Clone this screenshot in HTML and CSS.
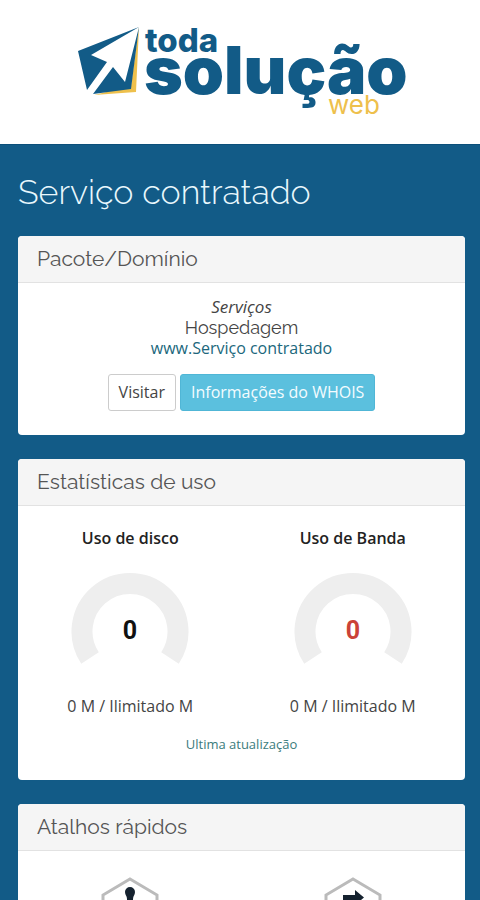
FILE: index.html
```html
<!DOCTYPE html>
<html lang="pt-BR">
<head>
<meta charset="utf-8">
<meta name="viewport" content="width=device-width, initial-scale=1">
<title>Serviço contratado</title>
<link rel="stylesheet" href="styles.css">
</head>
<body>
<header class="site-header">
  <svg class="logo" viewBox="0 0 340 100" role="img" aria-label="toda solução web">
    <path class="logo-gold" d="M69 7 66 72 24 75 61 66z"/>
    <path class="logo-blue" d="M8 31 69 7 21 35 37 42 17 70z"/>
    <path class="logo-blue" d="M23 74 43 47 55 62 69 7 61 69z"/>
    <text class="logo-blue logo-toda" x="75" y="32">toda</text>
    <text class="logo-blue logo-solucao" x="74" y="74">solução</text>
    <text class="logo-gold logo-web" x="258" y="94">web</text>
  </svg>
</header>
<main class="content">
  <h1 class="page-title">Serviço contratado</h1>

  <section class="card">
    <h2 class="card-title">Pacote/Domínio</h2>
    <div class="card-body package">
      <em>Serviços</em>
      <span class="package-name">Hospedagem</span>
      <a href="#site">www.Serviço contratado</a>
      <div class="actions">
        <button class="btn" type="button">Visitar</button>
        <button class="btn btn-info" type="button">Informações do WHOIS</button>
      </div>
    </div>
  </section>

  <section class="card">
    <h2 class="card-title">Estatísticas de uso</h2>
    <div class="card-body usage">
      <div class="columns">
        <div class="meter">
          <h3>Uso de disco</h3>
          <svg class="gauge" viewBox="0 0 118 94" role="img" aria-label="0">
            <path class="gauge-track" d="M19 86A48 48 0 1 1 99 86"/>
            <text class="gauge-value" x="59" y="67">0</text>
          </svg>
          <p>0 M / Ilimitado M</p>
        </div>
        <div class="meter">
          <h3>Uso de Banda</h3>
          <svg class="gauge" viewBox="0 0 118 94" role="img" aria-label="0">
            <path class="gauge-track" d="M19 86A48 48 0 1 1 99 86"/>
            <text class="gauge-value gauge-alert" x="59" y="67">0</text>
          </svg>
          <p>0 M / Ilimitado M</p>
        </div>
      </div>
      <p class="updated">Ultima atualização</p>
    </div>
  </section>

  <section class="card">
    <h2 class="card-title">Atalhos rápidos</h2>
    <div class="card-body columns shortcuts">
      <a href="#contas" aria-label="Contas">
        <svg class="hex" viewBox="0 0 60 66">
          <path class="hex-line" d="M30 2 57 18V48L30 64 3 48V18z"/>
          <path class="hex-icon" d="M30 10a5 5 0 0 1 5 5c0 3-2 4-2 7v6h8v6H19v-6h8v-6c0-3-2-4-2-7a5 5 0 0 1 5-5z"/>
        </svg>
      </a>
      <a href="#redirecionamentos" aria-label="Redirecionamentos">
        <svg class="hex" viewBox="0 0 60 66">
          <path class="hex-line" d="M30 2 57 18V48L30 64 3 48V18z"/>
          <path class="hex-icon" d="M20 18H32V13L41 20.500 32 28V23H20zM41 32H29V27L20 34.500 29 42V37H41z"/>
        </svg>
      </a>
    </div>
  </section>
</main>
</body>
</html>
```
FILE: styles.css
```css
* { box-sizing: border-box; }

body {
  height: 100vh;
  margin: 0;
  overflow: hidden;
  background: #125b87;
  color: #444;
  font: 16px/21px "Open Sans", "Noto Sans", sans-serif;
}

h1, h2, h3, p { margin: 0; }

a { color: #20677c; text-decoration: none; }

.site-header {
  display: flex;
  justify-content: center;
  padding: 20px 0 24px;
  background: #fff;
  border-bottom: 1px solid #0b4f7a;
}

.logo { width: 340px; height: 100px; }
.logo-blue { fill: #125b87; }
.logo-gold { fill: #eec04c; }
.logo text { font-family: Inter, sans-serif; }
.logo .logo-toda { font-size: 33px; font-weight: 800; }
.logo .logo-solucao { font-size: 66px; font-weight: 900; }
.logo .logo-web { font-size: 26px; font-weight: 400; }

.content { padding: 24px 15px 24px 18px; }

.page-title {
  margin-bottom: 20px;
  color: #e9f8fd;
  font: 300 34px/47px Raleway, Lato, sans-serif;
}

.card {
  margin-bottom: 24px;
  overflow: hidden;
  background: #fff;
  border-radius: 4px;
}

.card-title {
  padding: 0 19px;
  background: #f5f5f5;
  border-bottom: 1px solid #e2e2e2;
  color: #555;
  font: 400 21px/46px Raleway, Lato, sans-serif;
}

.package {
  display: flex;
  flex-direction: column;
  align-items: center;
  padding: 13px 19px 24px;
}

.package em { font-size: 17px; }
.package-name { font-family: Raleway, Lato, sans-serif; font-size: 18px; }

.actions { display: flex; gap: 4px; margin-top: 15px; }

.btn {
  height: 37px;
  padding: 0 10px;
  background: #fff;
  border: 1px solid #ccc;
  border-radius: 3px;
  color: #444;
  font: inherit;
}

.btn-info { background: #5bc0de; border-color: #50b6d6; color: #f4fcff; }

.columns { display: grid; grid-template-columns: 1fr 1fr; }

.usage { padding: 21px 1px 26px; text-align: center; }

.meter h3 { color: #222; font-size: 16px; font-weight: 600; line-height: 22px; }

.gauge { display: block; width: 118px; height: 94px; margin: 23px auto 30px; }
.gauge-track { fill: none; stroke: #eee; stroke-width: 21px; }
.gauge-value { fill: #111; font: 700 25px Roboto, sans-serif; text-anchor: middle; }
.gauge-alert { fill: #cb4238; }

.updated { margin-top: 17px; color: #3b7c7c; font-size: 13px; line-height: 20px; }

.shortcuts { padding: 26px 1px; justify-items: center; }
.hex { display: block; width: 60px; height: 66px; }
.hex-line { fill: none; stroke: #bbb; stroke-width: 3px; }
.hex-icon { fill: #15222f; }
```
